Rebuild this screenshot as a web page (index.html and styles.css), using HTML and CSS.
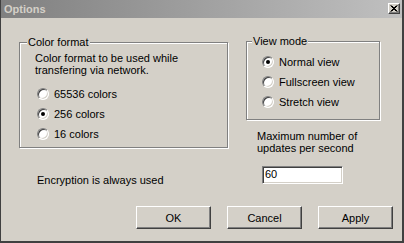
FILE: index.html
```html
<!DOCTYPE html>
<html>
<head>
    <link rel="stylesheet" href="styles.css">
</head>
<body>
    <div class="window">
        <div class="titlebar">
            <span class="title">Options</span>
            <button class="close-btn" aria-label="Close">
                <svg width="8" height="7" viewBox="0 0 8 7">
                    <path d="M0.5 0.5 L6.5 6.5 M1.5 0.5 L7.5 6.5 M6.5 0.5 L0.5 6.5 M7.5 0.5 L1.5 6.5" stroke="#000" stroke-width="1" fill="none"/>
                </svg>
            </button>
        </div>
        <div class="dialog-body">
            <div class="panes">
                <div class="left-col">
                    <fieldset class="group color-group">
                        <legend>Color format</legend>
                        <p class="note">Color format to be used while<br>transfering via network.</p>
                        <label class="option"><span class="radio"></span>65536 colors</label>
                        <label class="option"><span class="radio checked"></span>256 colors</label>
                        <label class="option"><span class="radio"></span>16 colors</label>
                    </fieldset>
                    <p class="encrypt">Encryption is always used</p>
                </div>
                <div class="right-col">
                    <fieldset class="group view-group">
                        <legend>View mode</legend>
                        <label class="option"><span class="radio checked"></span>Normal view</label>
                        <label class="option"><span class="radio"></span>Fullscreen view</label>
                        <label class="option"><span class="radio"></span>Stretch view</label>
                    </fieldset>
                    <p class="rate-label">Maximum number of<br>updates per second</p>
                    <div class="textbox">60</div>
                </div>
            </div>
            <div class="buttons">
                <button class="push">OK</button>
                <button class="push">Cancel</button>
                <button class="push">Apply</button>
            </div>
        </div>
    </div>
</body>
</html>
```

FILE: styles.css
```css
body {
    margin: 0;
    font-family: "Liberation Sans", Arial, sans-serif;
    font-size: 11px;
    color: #000;
    background-color: #d4d0c8;
}

.window {
    width: 404px;
    height: 243px;
    box-sizing: border-box;
    background-color: #d4d0c8;
    border-left: 1px solid #404040;
    border-right: 2px solid #404040;
    border-bottom: 2px solid #404040;
}

.titlebar {
    height: 18px;
    display: flex;
    align-items: center;
    justify-content: space-between;
    padding: 0 2px 0 3px;
    background: linear-gradient(to right, #808080, #c0c0c0);
}

.title {
    color: #d4d0c8;
    font-weight: bold;
    font-size: 11px;
}

.close-btn {
    width: 12px;
    height: 11px;
    padding: 0;
    margin-top: -2px;
    display: flex;
    align-items: center;
    justify-content: center;
    background-color: #d4d0c8;
    border: 1px solid;
    border-color: #fff #404040 #404040 #fff;
    box-shadow: inset -1px -1px 0 #808080;
}

.dialog-body {
    padding: 18px 0 0 18px;
}

.panes {
    display: flex;
    gap: 18px;
    align-items: flex-start;
}

.group {
    margin: 0;
    border: 1px solid #808080;
    box-shadow: inset 1px 1px 0 #fff, 1px 1px 0 #fff;
    min-width: 0;
}

.group legend {
    padding: 0 1px;
    line-height: 13px;
    background-color: #d4d0c8;
}

.color-group {
    width: 209px;
    box-sizing: border-box;
    padding: 3px 0 3px 15px;
}

.color-group legend {
    margin-left: -8px;
}

.view-group {
    width: 134px;
    box-sizing: border-box;
    margin-top: -1px;
    padding: 4px 0 7px 15px;
}

.view-group legend {
    margin-left: -10px;
}

.note {
    margin: 0 0 8px;
    line-height: 12px;
}

.option {
    display: flex;
    align-items: center;
    gap: 5px;
    height: 20px;
    margin-left: 2px;
}

.view-group .option {
    margin-left: 0;
}

.radio {
    position: relative;
    width: 12px;
    height: 12px;
    box-sizing: border-box;
    border-radius: 50%;
    background-color: #fff;
    border: 1px solid;
    border-color: #808080 #fff #fff #808080;
    box-shadow: inset 1px 1px 0 #404040, inset -1px -1px 0 #d4d0c8;
}

.radio.checked::after {
    content: "";
    position: absolute;
    left: 3px;
    top: 3px;
    width: 4px;
    height: 4px;
    border-radius: 50%;
    background-color: #000;
}

.encrypt {
    margin: 26px 0 0 18px;
    line-height: 12px;
}

.rate-label {
    margin: 10px 0 0 11px;
    line-height: 12px;
}

.textbox {
    width: 81px;
    height: 18px;
    box-sizing: border-box;
    margin: 12px 0 0 16px;
    padding: 1px 0 0 2px;
    line-height: 13px;
    background-color: #fff;
    border: 1px solid;
    border-color: #808080 #fff #fff #808080;
    box-shadow: inset 1px 1px 0 #404040, inset -1px -1px 0 #d4d0c8;
}

.buttons {
    display: flex;
    justify-content: flex-end;
    gap: 16px;
    margin-top: 20px;
    padding-right: 9px;
}

.push {
    width: 75px;
    height: 23px;
    padding: 0;
    font-family: "Liberation Sans", Arial, sans-serif;
    font-size: 11px;
    color: #000;
    background-color: #d4d0c8;
    border: 1px solid;
    border-color: #fff #404040 #404040 #fff;
    box-shadow: inset -1px -1px 0 #808080;
}
```
